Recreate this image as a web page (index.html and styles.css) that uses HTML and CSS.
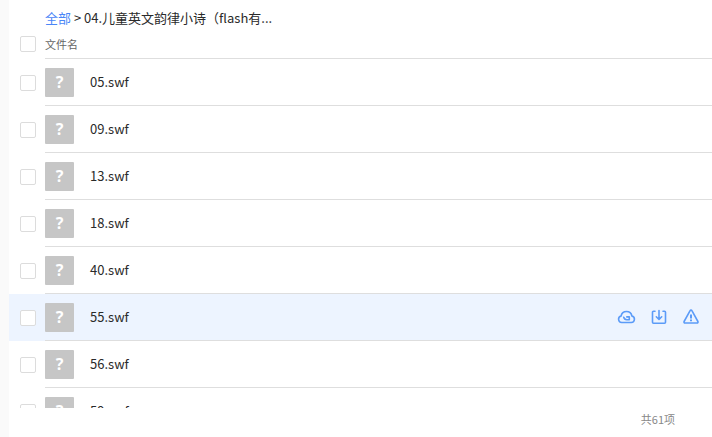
FILE: index.html
```
<!DOCTYPE html>
<html lang="zh-CN">

<head>
    <meta charset="UTF-8">
    <meta name="viewport" content="width=device-width, initial-scale=1.0">
    <title>文件列表</title>
    <link rel="stylesheet" href="styles.css">
</head>

<body>
    <main class="panel">
        <nav class="breadcrumb">
            <a href="#">全部</a> &gt; <span>04.儿童英文韵律小诗（flash有...</span>
        </nav>
        <div class="list-header">
            <input type="checkbox" class="check" id="check-all">
            <label class="header-label" for="check-all">文件名</label>
        </div>
        <ul class="files">
            <li class="file">
                <input type="checkbox" class="check" id="file-05">
                <div class="file-main">
                    <span class="file-icon">?</span>
                    <label class="file-name" for="file-05">05.swf</label>
                </div>
            </li>
            <li class="file">
                <input type="checkbox" class="check" id="file-09">
                <div class="file-main">
                    <span class="file-icon">?</span>
                    <label class="file-name" for="file-09">09.swf</label>
                </div>
            </li>
            <li class="file">
                <input type="checkbox" class="check" id="file-13">
                <div class="file-main">
                    <span class="file-icon">?</span>
                    <label class="file-name" for="file-13">13.swf</label>
                </div>
            </li>
            <li class="file">
                <input type="checkbox" class="check" id="file-18">
                <div class="file-main">
                    <span class="file-icon">?</span>
                    <label class="file-name" for="file-18">18.swf</label>
                </div>
            </li>
            <li class="file">
                <input type="checkbox" class="check" id="file-40">
                <div class="file-main">
                    <span class="file-icon">?</span>
                    <label class="file-name" for="file-40">40.swf</label>
                </div>
            </li>
            <li class="file active">
                <input type="checkbox" class="check" id="file-55">
                <div class="file-main">
                    <span class="file-icon">?</span>
                    <label class="file-name" for="file-55">55.swf</label>
                    <div class="actions">
                        <button type="button" aria-label="转存到云盘">
                            <svg viewBox="0 0 18 18">
                                <path d="M3.700 14.500h9.600a3.300 3.300 0 0 0 .600-6.500 5.500 5.500 0 0 0-10.800 0 3.300 3.300 0 0 0 .600 6.500z" />
                                <path d="M5.700 9.300c.500 1.700 1.600 2.400 3 2.400h2.600V8.900H8.800" />
                            </svg>
                        </button>
                        <button type="button" aria-label="下载">
                            <svg viewBox="0 0 18 18">
                                <path d="M5 3.200H3.500a1 1 0 0 0-1 1v10a1 1 0 0 0 1 1h11a1 1 0 0 0 1-1v-10a1 1 0 0 0-1-1H13" />
                                <path d="M9 2.500v8.800M6.300 8.800 9 11.500l2.700-2.700" />
                            </svg>
                        </button>
                        <button type="button" aria-label="举报">
                            <svg viewBox="0 0 18 18">
                                <path d="M8.100 2.700 2.100 13.500a1 1 0 0 0 .900 1.500h12a1 1 0 0 0 .900-1.500L9.900 2.700a1 1 0 0 0-1.800 0z" />
                                <path class="mark" d="M9 6.500v4M9 11.500v1.800" />
                            </svg>
                        </button>
                    </div>
                </div>
            </li>
            <li class="file">
                <input type="checkbox" class="check" id="file-56">
                <div class="file-main">
                    <span class="file-icon">?</span>
                    <label class="file-name" for="file-56">56.swf</label>
                </div>
            </li>
            <li class="file">
                <input type="checkbox" class="check" id="file-59">
                <div class="file-main">
                    <span class="file-icon">?</span>
                    <label class="file-name" for="file-59">59.swf</label>
                </div>
            </li>
        </ul>
        <footer class="total">共61项</footer>
    </main>
</body>

</html>
```
FILE: styles.css
```
* {
    box-sizing: border-box;
}

body {
    margin: 0;
    background: #fafafa;
    color: #2a2a2a;
    font-family: "Noto Sans CJK SC", sans-serif;
    font-size: 13px;
}

.panel {
    display: flex;
    flex-direction: column;
    height: 100vh;
    margin-left: 9px;
    padding-top: 8px;
    background: #fff;
}

.breadcrumb {
    padding-left: 36px;
    line-height: 20px;
    white-space: nowrap;
}

.breadcrumb a {
    color: #4a86f7;
    text-decoration: none;
}

.list-header,
.file {
    display: flex;
    flex: none;
    gap: 9px;
    padding-left: 11px;
}

/* Check boxes */
.check {
    appearance: none;
    flex: none;
    width: 16px;
    height: 16px;
    margin: 16px 0 0;
    border: 1px solid #dcdcdc;
    border-radius: 2px;
    background: #fff;
}

.list-header .check {
    margin-top: 8px;
}

.header-label {
    flex: 1;
    height: 31px;
    padding-top: 8px;
    border-bottom: 1px solid #dedede;
    color: #666;
    font-size: 11px;
    line-height: 17px;
}

/* File list */
.files {
    flex: 1;
    min-height: 0;
    margin: 0;
    padding: 0;
    overflow: hidden;
    list-style: none;
}

.file-main {
    display: flex;
    flex: 1;
    align-items: center;
    height: 47px;
    padding-right: 12px;
    border-bottom: 1px solid #dedede;
}

.file.active {
    background: #edf4ff;
}

.file-icon {
    width: 29px;
    height: 29px;
    border-radius: 1px;
    background: #c6c6c6;
    color: #fff;
    font-family: "Noto Sans", sans-serif;
    font-size: 16px;
    font-weight: bold;
    line-height: 29px;
    text-align: center;
}

.file-name {
    flex: 1;
    margin-left: 16px;
    padding-bottom: 2px;
}

.actions {
    display: flex;
    gap: 14px;
}

.actions button {
    width: 18px;
    height: 18px;
    padding: 0;
    border: none;
    background: none;
    cursor: pointer;
}

.actions svg {
    display: block;
    width: 18px;
    height: 18px;
    overflow: visible;
    fill: none;
    stroke: #5b9bf8;
    stroke-width: 1.6;
    stroke-linecap: round;
    stroke-linejoin: round;
}

.actions .mark {
    stroke-linecap: butt;
    stroke-width: 2;
}

.total {
    height: 29px;
    padding-right: 37px;
    color: #888;
    font-size: 11px;
    line-height: 23px;
    text-align: right;
}
```
